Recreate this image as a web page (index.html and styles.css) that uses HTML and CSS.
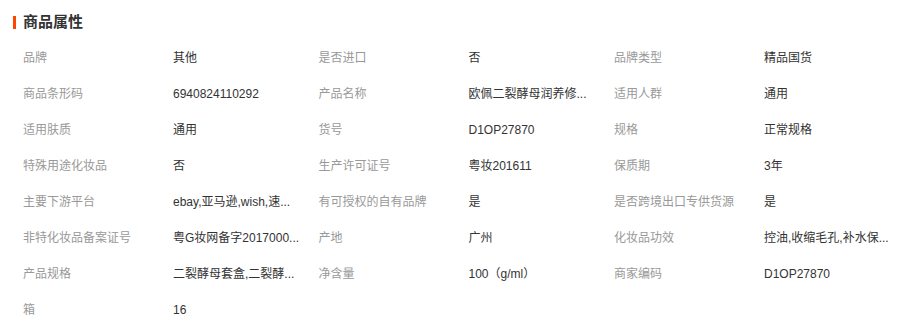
FILE: index.html
```html
<!DOCTYPE html>
<html lang="zh-CN">
<head>
<meta charset="utf-8">
<title>商品属性</title>
<link rel="stylesheet" href="styles.css">
</head>
<body>
<div class="panel">
  <div class="head"><span class="bar"></span><h2 class="title">商品属性</h2></div>
  <div class="attrs">
    <div class="k">品牌</div><div class="v">其他</div>
    <div class="k">是否进口</div><div class="v">否</div>
    <div class="k">品牌类型</div><div class="v">精品国货</div>

    <div class="k">商品条形码</div><div class="v">6940824110292</div>
    <div class="k">产品名称</div><div class="v">欧佩二裂酵母润养修...</div>
    <div class="k">适用人群</div><div class="v">通用</div>

    <div class="k">适用肤质</div><div class="v">通用</div>
    <div class="k">货号</div><div class="v">D1OP27870</div>
    <div class="k">规格</div><div class="v">正常规格</div>

    <div class="k">特殊用途化妆品</div><div class="v">否</div>
    <div class="k">生产许可证号</div><div class="v">粤妆201611</div>
    <div class="k">保质期</div><div class="v">3年</div>

    <div class="k">主要下游平台</div><div class="v">ebay,亚马逊,wish,速...</div>
    <div class="k">有可授权的自有品牌</div><div class="v">是</div>
    <div class="k">是否跨境出口专供货源</div><div class="v">是</div>

    <div class="k">非特化妆品备案证号</div><div class="v">粤G妆网备字2017000...</div>
    <div class="k">产地</div><div class="v">广州</div>
    <div class="k">化妆品功效</div><div class="v">控油,收缩毛孔,补水保...</div>

    <div class="k">产品规格</div><div class="v">二裂酵母套盒,二裂酵...</div>
    <div class="k">净含量</div><div class="v">100（g/ml）</div>
    <div class="k">商家编码</div><div class="v">D1OP27870</div>

    <div class="k">箱</div><div class="v">16</div>
  </div>
</div>
</body>
</html>
```
FILE: styles.css
```css
html, body {
  margin: 0;
  padding: 0;
  background: #fff;
}
body {
  font-family: "Liberation Sans", "Noto Sans CJK SC", sans-serif;
  color: #333;
}
.panel {
  width: 915px;
}
.head {
  display: flex;
  align-items: center;
  height: 22px;
  padding: 11px 0 0 13px;
}
.bar {
  width: 3px;
  height: 13px;
  background: #ff4400;
  margin-right: 7px;
}
.title {
  margin: 0;
  font-size: 15px;
  font-weight: bold;
  color: #333;
  line-height: 22px;
}
.attrs {
  display: grid;
  grid-template-columns: 150px 145.5px 150px 145.5px 150px 145.5px;
  grid-auto-rows: 36px;
  padding: 7px 0 0 23px;
  font-size: 12px;
  line-height: 36px;
}
.k {
  color: #999;
  white-space: nowrap;
}
.v {
  color: #333;
  white-space: nowrap;
}
```
